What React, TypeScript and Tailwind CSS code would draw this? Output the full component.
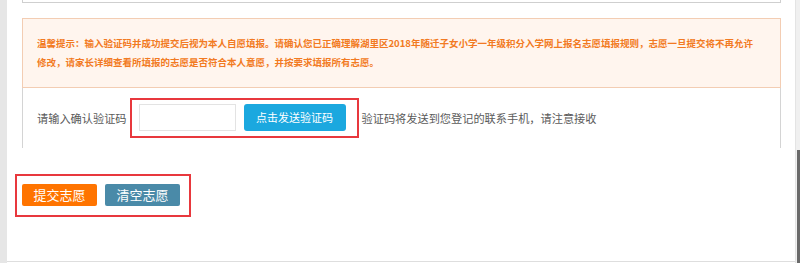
import React from 'react';

const cjk = { fontFamily: '"Microsoft YaHei", "Noto Sans CJK SC", "Noto Sans", sans-serif' };

export default function App() {
  return (
    <div className="flex h-[263px] w-[800px] overflow-hidden bg-white" style={cjk}>
      <div className="w-[7px] shrink-0 bg-[#e6e6e6]" />

      <main className="flex h-[262px] flex-1 flex-col border-b border-[#dedede]">
        {/* previous section, cut off at the top */}
        <div className="mx-[14px] ml-[15px] h-[3px] border-x border-b border-[#cfcfcf]" />

        {/* notice */}
        <div className="mx-[14px] ml-[15px] mt-[15px] whitespace-nowrap border border-[#f3cdb3] bg-[#fff5ee] py-[15px] pl-[14px] text-[9.5px] font-bold leading-[19px] text-[#f27a22]">
          温馨提示：输入验证码并成功提交后视为本人自愿填报。请确认您已正确理解湖里区2018年随迁子女小学一年级积分入学网上报名志愿填报规则，志愿一旦提交将不再允许
          <br />
          修改，请家长详细查看所填报的志愿是否符合本人意愿，并按要求填报所有志愿。
        </div>

        {/* verification row */}
        <div className="mx-[14px] ml-[15px] flex items-center border-x border-[#d4d4d4] py-[10px] pl-[14px] text-[11.2px] text-[#5a5a5a]">
          <span>请输入确认验证码</span>
          <div className="ml-[3px] flex items-center gap-[8px] border-2 border-[#e8383d] pb-[5px] pl-[7px] pr-[11px] pt-[4px]">
            <input className="h-[27px] w-[97px] border border-[#e3e3e3] bg-white px-2 outline-none" />
            <button className="h-[27px] w-[102px] rounded-[3px] bg-[#1ba8df] text-[11px] text-white">
              点击发送验证码
            </button>
          </div>
          <span className="ml-[3px]">验证码将发送到您登记的联系手机，请注意接收</span>
        </div>

        {/* actions */}
        <div className="ml-[8px] mt-[26px] flex w-fit gap-[8px] border-2 border-[#e8383d] pb-[9px] pl-[5px] pr-[9px] pt-[8px]">
          <button className="h-[22px] w-[75px] rounded-[2px] bg-[#ff7400] text-[13px] text-white">提交志愿</button>
          <button className="h-[22px] w-[75px] rounded-[2px] bg-[#4a8aa8] text-[13px] text-white">清空志愿</button>
        </div>
      </main>

      <div className="relative w-[5px] shrink-0 border-l border-[#e4e4e4] bg-[#f0f0f0]">
        <div className="absolute bottom-0 right-0 top-[150px] w-[3px] bg-[#6a6a6a]" />
      </div>
    </div>
  );
}
